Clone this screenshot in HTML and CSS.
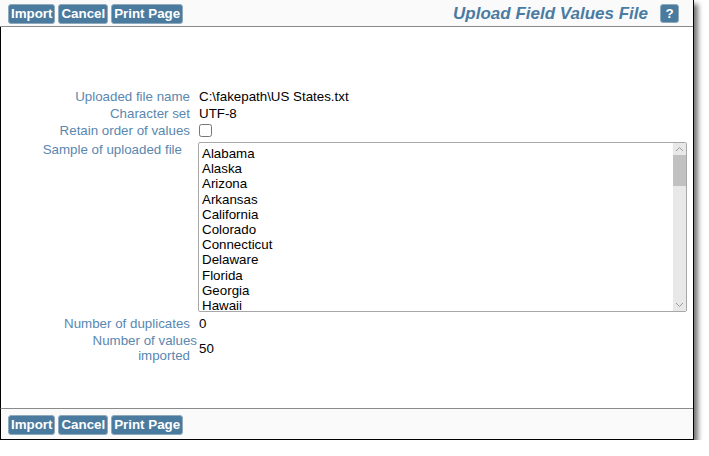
FILE: index.html
```html
<!DOCTYPE html>
<html lang="en">
<head>
    <meta charset="UTF-8">
    <title>Upload Field Values File</title>
    <link rel="stylesheet" href="styles.css">
</head>
<body>
    <div class="frame">
        <div class="toolbar top">
            <button class="btn">Import</button>
            <button class="btn">Cancel</button>
            <button class="btn">Print Page</button>
            <span class="title">Upload Field Values File</span>
            <button class="btn help">?</button>
        </div>

        <div class="main">
            <div class="form">
                <div class="label">Uploaded file name</div>
                <div class="value">C:\fakepath\US States.txt</div>

                <div class="label">Character set</div>
                <div class="value">UTF-8</div>

                <div class="label">Retain order of values</div>
                <div class="value"><input type="checkbox" class="check"></div>

                <div class="label sample">Sample of uploaded file</div>
                <div class="value">
                    <div class="scrollbox">
<textarea class="preview" readonly>Alabama
Alaska
Arizona
Arkansas
California
Colorado
Connecticut
Delaware
Florida
Georgia
Hawaii
Idaho
Illinois
Indiana
Iowa
Kansas
Kentucky
Louisiana
Maine
Maryland
Massachusetts
Michigan
Minnesota
Mississippi
Missouri
Montana
Nebraska
Nevada
New Hampshire
New Jersey
New Mexico
New York
North Carolina
North Dakota
Ohio
Oklahoma
Oregon
Pennsylvania
Rhode Island
South Carolina
South Dakota
Tennessee
Texas
Utah
Vermont
Virginia
Washington
West Virginia
Wisconsin
Wyoming</textarea>
                        <div class="scrollbar">
                            <div class="arrow">
                                <svg width="9" height="6" viewBox="0 0 9 6"><polyline points="1,5 4.5,1.5 8,5" fill="none" stroke="#9a9a9a" stroke-width="1"/></svg>
                            </div>
                            <div class="thumb"></div>
                            <div class="track"></div>
                            <div class="arrow">
                                <svg width="9" height="6" viewBox="0 0 9 6"><polyline points="1,1 4.5,4.5 8,1" fill="none" stroke="#9a9a9a" stroke-width="1"/></svg>
                            </div>
                        </div>
                    </div>
                </div>

                <div class="label">Number of duplicates</div>
                <div class="value">0</div>

                <div class="label"><span class="spill">Number of values</span><br>imported</div>
                <div class="value middle">50</div>
            </div>
        </div>

        <div class="toolbar bottom">
            <button class="btn">Import</button>
            <button class="btn">Cancel</button>
            <button class="btn">Print Page</button>
        </div>
    </div>
</body>
</html>
```

FILE: styles.css
```css
* { box-sizing: border-box; }
body { margin: 0; background: #fff; font-family: "Liberation Sans", Arial, sans-serif; font-size: 13.33px; color: #000; }

.frame { width: 694px; height: 440px; border-right: 1px solid #000; border-bottom: 1px solid #000; box-shadow: 4px 4px 5px rgba(0,0,0,0.55); display: flex; flex-direction: column; background: #fff; }

.toolbar { display: flex; align-items: center; gap: 3px; background: #fafafa; padding: 0 14px 0 8px; }
.toolbar.top { height: 27px; border-bottom: 1px solid #8a8a8a; padding-top: 1px; }
.toolbar.bottom { height: 31px; border-top: 1px solid #8a8a8a; border-left: 1px solid #000; padding-left: 7px; align-items: flex-start; padding-top: 6px; }

.btn { height: 20px; padding: 0 2px; border: 1px solid #8fa9bd; border-radius: 3px; background: #4a7b9f; color: #fff; font-family: inherit; font-size: 13.33px; font-weight: bold; line-height: 18px; cursor: pointer; }
.btn.help { width: 19px; height: 19px; padding: 0; margin-left: 9px; }

.title { margin-left: auto; color: #4a7ba3; font-size: 17px; font-weight: bold; font-style: italic; }

.main { flex: 1; border-left: 1px solid #000; padding-top: 61px; }

.form { display: grid; grid-template-columns: 189px 489px; column-gap: 8px; }
.label { color: #5a87b0; text-align: right; padding: 1px 0; line-height: 15px; }
.label.sample { padding-right: 8px; }
.spill { margin-right: -7px; white-space: nowrap; }
.value { padding: 1px 0 1px 1px; line-height: 15px; }
.value.middle { align-self: center; }

.check { width: 13px; height: 13px; margin: 1px 0 3px 0; display: block; }

.scrollbox { position: relative; width: 489px; height: 170px; margin: 0 0 2px -1px; }
.preview { display: block; width: 100%; height: 100%; margin: 0; padding: 3px 16px 2px 3px; border: 1px solid #a8a8a8; border-radius: 2px; font-family: inherit; font-size: 13.33px; line-height: 15.2px; color: #000; resize: none; overflow: hidden; background: #fff; }

/* drawn scrollbar, sits over the right edge of the textarea */
.scrollbar { position: absolute; top: 1px; right: 1px; bottom: 1px; width: 13px; background: #e8e8e8; display: flex; flex-direction: column; }
.arrow { height: 12px; display: flex; align-items: center; justify-content: center; }
.thumb { height: 31px; background: #c1c1c1; }
.track { flex: 1; }
```
